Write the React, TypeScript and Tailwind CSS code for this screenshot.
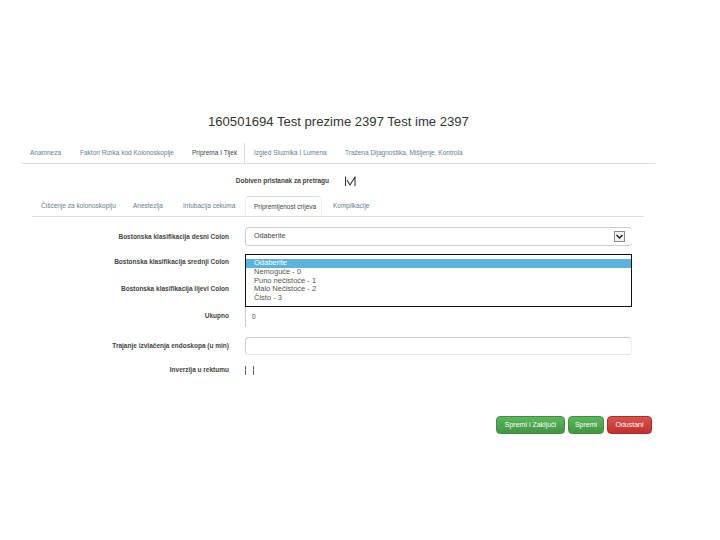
const font = { fontFamily: '"Liberation Sans", Arial, sans-serif' };

function Tab({ label, width }: { label: string; width: string }) {
  return <div className={width + " shrink-0 whitespace-nowrap text-[#66808f]"}>{label}</div>;
}

function Chevron() {
  return (
    <svg width="11" height="11" viewBox="0 0 11 11" className="shrink-0">
      <rect x="0.5" y="0.5" width="10" height="10" fill="#f4f4f4" stroke="#8a8a8a" />
      <path d="M2.5 4 L5.5 7 L8.5 4" fill="none" stroke="#222" strokeWidth="1.5" />
    </svg>
  );
}

function Label({ children, className }: { children: string; className?: string }) {
  return <div className={"w-[229px] shrink-0 text-right text-[6.5px] font-bold whitespace-nowrap text-[#444] " + (className ?? "")}>{children}</div>;
}

export default function App() {
  return (
    <div style={font} className="flex h-[540px] w-[720px] flex-col overflow-hidden bg-white pt-[114px]">
      <h1 className="pl-[208px] text-[13.1px] leading-[16px] whitespace-nowrap text-[#333]">160501694 Test prezime 2397 Test ime 2397</h1>

      <div className="mt-[13px] ml-[22px] flex h-[21px] w-[633px] items-center border-b border-[#ddd] pl-[8px] text-[6.5px]">
        <Tab label="Anamneza" width="w-[50px]" />
        <Tab label="Faktori Rizika kod Kolonoskopije" width="w-[112px]" />
        <div className="flex h-[20px] w-[53px] shrink-0 items-center border-r border-[#ddd] whitespace-nowrap text-[#444]">Priprema I Tijek</div>
        <Tab label="Izgled Sluznika I Lumena" width="ml-[9px] w-[91px]" />
        <Tab label="Tražena Dijagnostika, Mišljenje, Kontrola" width="w-[130px]" />
      </div>

      <div className="mt-[11px] flex h-[12px] items-center">
        <div className="w-[329px] shrink-0 text-right text-[6.5px] font-bold whitespace-nowrap text-[#444]">Dobiven pristanak za pretragu</div>
        <svg width="11" height="11" viewBox="0 0 11 11" className="ml-[16px]">
          <path d="M0.5 10 V0.5 M10 0.5 V10 M2 4 L5 9 L10 1" fill="none" stroke="#333" strokeWidth="1.1" />
        </svg>
      </div>

      <div className="mt-[9px] ml-[32px] flex h-[21px] w-[612px] items-center border-b border-[#ddd] pl-[9px] text-[6.5px]">
        <Tab label="Čišćenje za kolonoskopiju" width="w-[92px]" />
        <Tab label="Anestezija" width="w-[50px]" />
        <Tab label="Intubacija cekuma" width="w-[62px]" />
        <div className="flex h-[20px] w-[77px] shrink-0 items-center self-start rounded-t-sm border-x border-t border-x-[#f0f0f0] border-t-[#ddd] pl-[8px] whitespace-nowrap text-[#444]">Pripremljenost crijeva</div>
        <Tab label="Komplikacije" width="ml-[11px] w-[50px]" />
      </div>

      <div className="mt-[10px] flex h-[19px] items-center">
        <Label>Bostonska klasifikacija desni Colon</Label>
        <div className="ml-[16px] flex h-[19px] w-[387px] items-center justify-between rounded-sm border-y border-l border-[#ccc] pr-[7px] pl-[8px] text-[7.2px] text-[#444]">
          Odaberite
          <Chevron />
        </div>
      </div>

      <div className="mt-[8px] flex h-[53px]">
        <div className="flex w-[229px] shrink-0 flex-col">
          <Label className="mt-[3px]">Bostonska klasifikacija srednji Colon</Label>
          <Label className="mt-[17px]">Bostonska klasifikacija lijevi Colon</Label>
        </div>
        <div className="ml-[16px] w-[387px] border border-[#111] pt-[4px] text-[7.5px] leading-[8.8px] text-[#555]">
          <div className="bg-[#5bb2dd] pl-[8px] text-white">Odaberite</div>
          <div className="pl-[8px]">Nemoguće - 0</div>
          <div className="pl-[8px]">Puno nečistoće - 1</div>
          <div className="pl-[8px]">Malo Nečistoće - 2</div>
          <div className="pl-[8px]">Čisto - 3</div>
        </div>
      </div>

      <div className="flex h-[20px] items-center">
        <Label className="pb-[3px]">Ukupno</Label>
        <div className="ml-[16px] flex h-[20px] w-[387px] items-center border-l border-[#ccc] pl-[6px] text-[6.5px] text-[#444]">0</div>
      </div>

      <div className="mt-[10px] flex h-[18px] items-center">
        <Label>Trajanje izvlačenja endoskopa (u min)</Label>
        <div className="ml-[16px] h-[18px] w-[387px] rounded-sm border-t border-r border-b border-l border-t-[#ccc] border-r-[#f0f0f0] border-b-[#e8e8e8] border-l-[#ccc]"></div>
      </div>

      <div className="mt-[10px] flex h-[10px] items-center">
        <Label>Inverzija u rektumu</Label>
        <div className="ml-[16px] h-[9px] w-[9px] border-x border-[#666]"></div>
      </div>

      <div className="mt-[41px] ml-[496px] flex h-[18px] gap-[3px] text-[7px] text-white">
        <button className="flex h-[18px] w-[69px] items-center justify-center rounded-sm border border-[#3f8f3f] bg-gradient-to-b from-[#5cb85c] to-[#419641]">Spremi i Zaključi</button>
        <button className="flex h-[18px] w-[36px] items-center justify-center rounded-sm border border-[#3f8f3f] bg-gradient-to-b from-[#5cb85c] to-[#419641]">Spremi</button>
        <button className="flex h-[18px] w-[45px] items-center justify-center rounded-sm border border-[#b02a2a] bg-gradient-to-b from-[#d9534f] to-[#c12e2a]">Odustani</button>
      </div>
    </div>
  );
}
